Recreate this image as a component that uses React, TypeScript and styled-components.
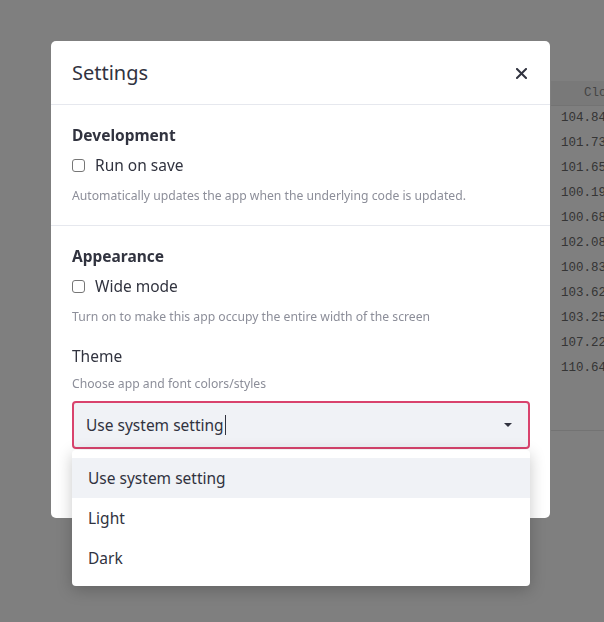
import React from "react";
import styled, { createGlobalStyle } from "styled-components";

const GlobalStyle = createGlobalStyle`
  html, body { margin: 0; padding: 0; background: #ffffff; overflow: hidden; }
  body { font-family: "Noto Sans", "Open Sans", sans-serif; color: #31333f; }
  * { box-sizing: border-box; }
`;

const Page = styled.div`
  width: 604px;
  height: 622px;
  display: flex;
  flex-direction: column;
  padding: 81px 0 0 551px;
`;

const DataFrame = styled.div`
  width: 53px;
  height: 350px;
  overflow: hidden;
  border-bottom: 1px solid #e6e6e6;
  font-family: "Liberation Mono", "DejaVu Sans Mono", monospace;
  font-size: 12.5px;
  white-space: nowrap;
`;

const HeaderCell = styled.div`
  height: 25px;
  line-height: 25px;
  background: #f3f3f3;
  color: #8a8a8a;
  padding-left: 33px;
  border-bottom: 1px solid #e6e6e6;
`;

const Cell = styled.div`
  height: 25px;
  line-height: 25px;
  color: #6a6a6a;
  padding-left: 10px;
`;

const Overlay = styled.div`
  position: fixed;
  inset: 0;
  background: rgba(0, 0, 0, 0.5);
  display: flex;
  align-items: flex-start;
  padding: 41px 0 0 51px;
`;

const Modal = styled.div`
  width: 499px;
  background: #ffffff;
  border-radius: 5px;
  display: flex;
  flex-direction: column;
`;

const ModalHeader = styled.div`
  display: flex;
  align-items: center;
  justify-content: space-between;
  padding: 20px 21px 19px 21px;
  border-bottom: 1px solid #e6e8ee;
`;

const Title = styled.h2`
  margin: 0;
  font-size: 20px;
  line-height: 24px;
  font-weight: 400;
  color: #31333f;
`;

const CloseButton = styled.button`
  border: none;
  background: none;
  padding: 0;
  width: 14px;
  height: 14px;
  display: flex;
  align-items: center;
  justify-content: center;
  cursor: pointer;
  margin-right: 1px;
`;

const Section = styled.div<{ $last?: boolean }>`
  display: flex;
  flex-direction: column;
  padding: 18px 20px ${(p) => (p.$last ? "69px" : "19px")} 21px;
  border-bottom: ${(p) => (p.$last ? "none" : "1px solid #e6e8ee")};
`;

const SectionTitle = styled.h3`
  margin: 0;
  font-size: 15.5px;
  line-height: 24px;
  font-weight: 700;
  color: #31333f;
`;

const CheckRow = styled.label`
  display: flex;
  align-items: center;
  gap: 10px;
  margin-top: 6px;
  font-size: 15.5px;
  line-height: 24px;
  color: #31333f;
`;

const Check = styled.input`
  appearance: none;
  margin: 0;
  width: 13px;
  height: 13px;
  border: 1px solid #767676;
  border-radius: 3px;
  background: #ffffff;
`;

const Help = styled.p<{ $gap?: number }>`
  margin: ${(p) => p.$gap ?? 9}px 0 0 0;
  font-size: 12.2px;
  line-height: 20px;
  color: #8c8e99;
`;

const FieldLabel = styled.div`
  margin-top: 17px;
  font-size: 15.5px;
  line-height: 24px;
  color: #31333f;
`;

const SelectWrap = styled.div`
  position: relative;
  margin-top: 7px;
`;

const SelectBox = styled.div`
  height: 48px;
  border: 2px solid #d9436d;
  border-radius: 4px;
  background: #f0f2f6;
  display: flex;
  align-items: center;
  padding: 0 16px 0 12px;
  font-size: 15.5px;
  color: #31333f;
`;

const Caret = styled.span`
  display: inline-block;
  width: 1px;
  height: 20px;
  background: #31333f;
  margin-left: 1px;
`;

const Spacer = styled.div`
  flex: 1;
`;

const Menu = styled.ul`
  position: absolute;
  top: 49px;
  left: 0;
  right: 0;
  margin: 0;
  padding: 8px 0;
  list-style: none;
  background: #ffffff;
  border-radius: 4px;
  box-shadow: 0 4px 16px rgba(0, 0, 0, 0.22);
  z-index: 2;
`;

const MenuItem = styled.li<{ $active?: boolean }>`
  height: 40px;
  display: flex;
  align-items: center;
  padding-left: 16px;
  font-size: 15.5px;
  color: #31333f;
  background: ${(p) => (p.$active ? "#f0f2f6" : "#ffffff")};
`;

const values = [
  "104.84",
  "101.73",
  "101.65",
  "100.19",
  "100.68",
  "102.08",
  "100.83",
  "103.62",
  "103.25",
  "107.22",
  "110.64",
];

export default function App() {
  return (
    <>
      <GlobalStyle />
      <Page>
        <DataFrame>
          <HeaderCell>Close</HeaderCell>
          {values.map((v) => (
            <Cell key={v}>{v}</Cell>
          ))}
        </DataFrame>
      </Page>
      <Overlay>
        <Modal>
          <ModalHeader>
            <Title>Settings</Title>
            <CloseButton aria-label="Close">
              <svg width="11" height="11" viewBox="0 0 11 11">
                <path
                  d="M1 1 L10 10 M10 1 L1 10"
                  stroke="#31333f"
                  strokeWidth="2"
                  strokeLinecap="square"
                />
              </svg>
            </CloseButton>
          </ModalHeader>
          <Section>
            <SectionTitle>Development</SectionTitle>
            <CheckRow>
              <Check type="checkbox" />
              Run on save
            </CheckRow>
            <Help>Automatically updates the app when the underlying code is updated.</Help>
          </Section>
          <Section $last>
            <SectionTitle>Appearance</SectionTitle>
            <CheckRow>
              <Check type="checkbox" />
              Wide mode
            </CheckRow>
            <Help>Turn on to make this app occupy the entire width of the screen</Help>
            <FieldLabel>Theme</FieldLabel>
            <Help $gap={6}>Choose app and font colors/styles</Help>
            <SelectWrap>
              <SelectBox>
                Use system setting
                <Caret />
                <Spacer />
                <svg width="8" height="5" viewBox="0 0 8 5">
                  <path d="M0 0 L8 0 L4 4 Z" fill="#31333f" />
                </svg>
              </SelectBox>
              <Menu>
                <MenuItem $active>Use system setting</MenuItem>
                <MenuItem>Light</MenuItem>
                <MenuItem>Dark</MenuItem>
              </Menu>
            </SelectWrap>
          </Section>
        </Modal>
      </Overlay>
    </>
  );
}
